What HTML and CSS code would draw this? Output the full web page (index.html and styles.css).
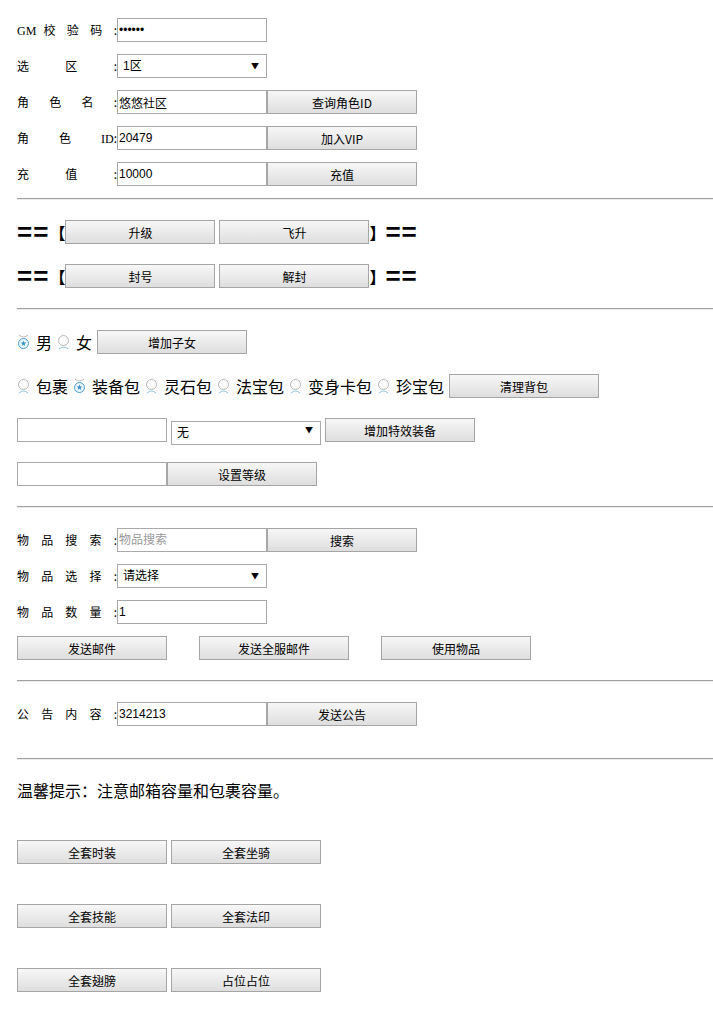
FILE: index.html
```html
<!DOCTYPE html>
<html lang="zh-CN">
<head>
  <meta charset="UTF-8">
  <meta name="viewport" content="width=device-width, initial-scale=1.0">
  <title>GM 管理后台</title>
  <link rel="stylesheet" href="styles.css">
</head>
<body>

  <!-- radio skin -->
  <svg class="defs" width="0" height="0">
    <symbol id="radio-off" viewBox="0 0 13 16">
      <circle cx="6.5" cy="6.5" r="5" fill="#fbfbfb" stroke="#b8b8b8"/>
      <path d="M2 15 Q6.5 11 11 15" fill="none" stroke="#8cc4e0"/>
    </symbol>
    <symbol id="radio-on" viewBox="0 0 13 16">
      <path d="M2 1 Q6.5 5 11 1" fill="none" stroke="#b8b8b8"/>
      <circle cx="6.5" cy="9.5" r="5" fill="#eaf5fc" stroke="#4a9fd0"/>
      <polygon fill="#3b93c9" points="6.5,6.5 7.26,8.45 9.35,8.57 7.74,9.9 8.26,11.93 6.5,10.8 4.74,11.93 5.26,9.9 3.65,8.57 5.74,8.45"/>
    </symbol>
  </svg>

  <div class="page">

    <!-- account -->
    <div class="row">
      <span class="label"><span class="latin">GM</span> 校 验 码 :</span>
      <input class="field" type="password" value="123456">
    </div>
    <div class="row">
      <span class="label">选 区 :</span>
      <span class="pick">
        <select class="field select">
          <option>1区</option>
          <option>2区</option>
        </select>
      </span>
    </div>
    <div class="row">
      <span class="label">角 色 名 :</span>
      <input class="field" type="text" value="悠悠社区">
      <button class="btn">查询角色ID</button>
    </div>
    <div class="row">
      <span class="label">角 色 <span class="latin">ID</span>:</span>
      <input class="field" type="text" value="20479">
      <button class="btn">加入VIP</button>
    </div>
    <div class="row">
      <span class="label">充 值 :</span>
      <input class="field" type="text" value="10000">
      <button class="btn">充值</button>
    </div>

    <hr>

    <!-- role actions -->
    <div class="bar">
      <span class="deco"><span class="eq">==</span>【</span>
      <button class="btn">升级</button>
      <button class="btn">飞升</button>
      <span class="deco">】<span class="eq">==</span></span>
    </div>
    <div class="bar">
      <span class="deco"><span class="eq">==</span>【</span>
      <button class="btn">封号</button>
      <button class="btn">解封</button>
      <span class="deco">】<span class="eq">==</span></span>
    </div>

    <hr>

    <!-- children / bags -->
    <div class="opts">
      <label class="opt"><svg class="radio"><use href="#radio-on"/></svg>男</label>
      <label class="opt"><svg class="radio"><use href="#radio-off"/></svg>女</label>
      <button class="btn">增加子女</button>
    </div>
    <div class="opts">
      <label class="opt"><svg class="radio"><use href="#radio-off"/></svg>包裹</label>
      <label class="opt"><svg class="radio"><use href="#radio-on"/></svg>装备包</label>
      <label class="opt"><svg class="radio"><use href="#radio-off"/></svg>灵石包</label>
      <label class="opt"><svg class="radio"><use href="#radio-off"/></svg>法宝包</label>
      <label class="opt"><svg class="radio"><use href="#radio-off"/></svg>变身卡包</label>
      <label class="opt"><svg class="radio"><use href="#radio-off"/></svg>珍宝包</label>
      <button class="btn">清理背包</button>
    </div>
    <div class="opts gap4">
      <input class="field" type="text">
      <span class="pick">
        <select class="field select">
          <option>无</option>
        </select>
      </span>
      <button class="btn">增加特效装备</button>
    </div>
    <div class="opts tight">
      <input class="field" type="text">
      <button class="btn">设置等级</button>
    </div>

    <hr>

    <!-- items -->
    <div class="row">
      <span class="label">物 品 搜 索 :</span>
      <input class="field" type="text" placeholder="物品搜索">
      <button class="btn">搜索</button>
    </div>
    <div class="row">
      <span class="label">物 品 选 择 :</span>
      <span class="pick">
        <select class="field select">
          <option>请选择</option>
        </select>
      </span>
    </div>
    <div class="row">
      <span class="label">物 品 数 量 :</span>
      <input class="field" type="text" value="1">
    </div>
    <div class="row wide last">
      <button class="btn">发送邮件</button>
      <button class="btn">发送全服邮件</button>
      <button class="btn">使用物品</button>
    </div>

    <hr>

    <!-- notice -->
    <div class="row notice">
      <span class="label">公 告 内 容 :</span>
      <input class="field" type="text" value="3214213">
      <button class="btn">发送公告</button>
    </div>

    <hr>

    <p class="tip">温馨提示：注意邮箱容量和包裹容量。</p>

    <div class="sets">
      <button class="btn">全套时装</button>
      <button class="btn">全套坐骑</button>
    </div>
    <div class="sets">
      <button class="btn">全套技能</button>
      <button class="btn">全套法印</button>
    </div>
    <div class="sets">
      <button class="btn">全套翅膀</button>
      <button class="btn">占位占位</button>
    </div>

  </div>

</body>
</html>
```

FILE: styles.css
```css
/* Reset */
* {
  margin: 0;
  padding: 0;
  box-sizing: border-box;
}

body {
  font-family: "Noto Sans CJK SC", "Liberation Sans", sans-serif;
  font-size: 12px;
  color: #000;
  background: #fff;
}

.defs {
  position: absolute;
}

.page {
  padding: 18px 0 0 17px;
}

hr {
  height: 0;
  border: none;
  border-top: 1px solid #a0a0a0;
  border-bottom: 1px solid #ececec;
  margin: 0 0 20px;
}

/* label : field : button rows */
.row {
  display: flex;
  align-items: center;
  height: 24px;
  margin-bottom: 12px;
}

.row.last {
  margin-bottom: 20px;
}

.row.notice {
  margin-bottom: 32px;
}

.row.wide {
  gap: 32px;
}

.label {
  width: 100px;
  text-align: justify;
  text-align-last: justify;
  text-justify: inter-word;
  white-space: nowrap;
  font-size: 12px;
  line-height: 24px;
}

.latin {
  font-family: "Liberation Serif", serif;
  font-size: 12px;
}

.field {
  width: 150px;
  height: 24px;
  border: 1px solid #a9a9a9;
  background: #fff;
  padding: 0 1px;
  font-family: "Liberation Sans", "Noto Sans CJK SC", sans-serif;
  font-size: 12px;
  color: #000;
  outline: none;
}

.field::placeholder {
  color: #999;
}

/* select with a small black arrow */
.pick {
  position: relative;
  display: inline-block;
  height: 24px;
}

.select {
  appearance: none;
  -webkit-appearance: none;
  padding-left: 5px;
  border-radius: 0;
}

.pick::after {
  content: "▼";
  position: absolute;
  right: 8px;
  top: 7px;
  font-size: 8px;
  line-height: 10px;
  pointer-events: none;
}

.btn {
  width: 150px;
  height: 24px;
  border: 1px solid #a5a5a5;
  background: linear-gradient(#f7f7f7, #dedede);
  font-family: "Noto Sans CJK SC", "Liberation Sans", sans-serif;
  font-size: 12px;
  color: #000;
  cursor: pointer;
}

.btn:hover {
  background: linear-gradient(#ffffff, #e6e6e6);
}

/* ==【 button button 】== */
.bar {
  display: flex;
  align-items: center;
  height: 24px;
  margin-bottom: 20px;
}

.bar .btn + .btn {
  margin-left: 4px;
}

.deco {
  display: flex;
  align-items: center;
  font-size: 16px;
  font-weight: bold;
  line-height: 24px;
}

.eq {
  font-family: "Liberation Sans", sans-serif;
  font-size: 26px;
  font-weight: bold;
  line-height: 24px;
  letter-spacing: 1px;
}

/* radio groups */
.opts {
  display: flex;
  align-items: center;
  gap: 5px;
  height: 24px;
  margin-bottom: 20px;
  font-size: 16px;
}

.opts.gap4 {
  gap: 4px;
}

.opts.tight {
  gap: 0;
}

.opt {
  display: flex;
  align-items: center;
  gap: 6px;
  line-height: 24px;
}

.radio {
  width: 13px;
  height: 16px;
}

.tip {
  font-size: 16px;
  line-height: 20px;
  margin-bottom: 40px;
}

.sets {
  display: flex;
  gap: 4px;
  height: 24px;
  margin-bottom: 40px;
}
```
